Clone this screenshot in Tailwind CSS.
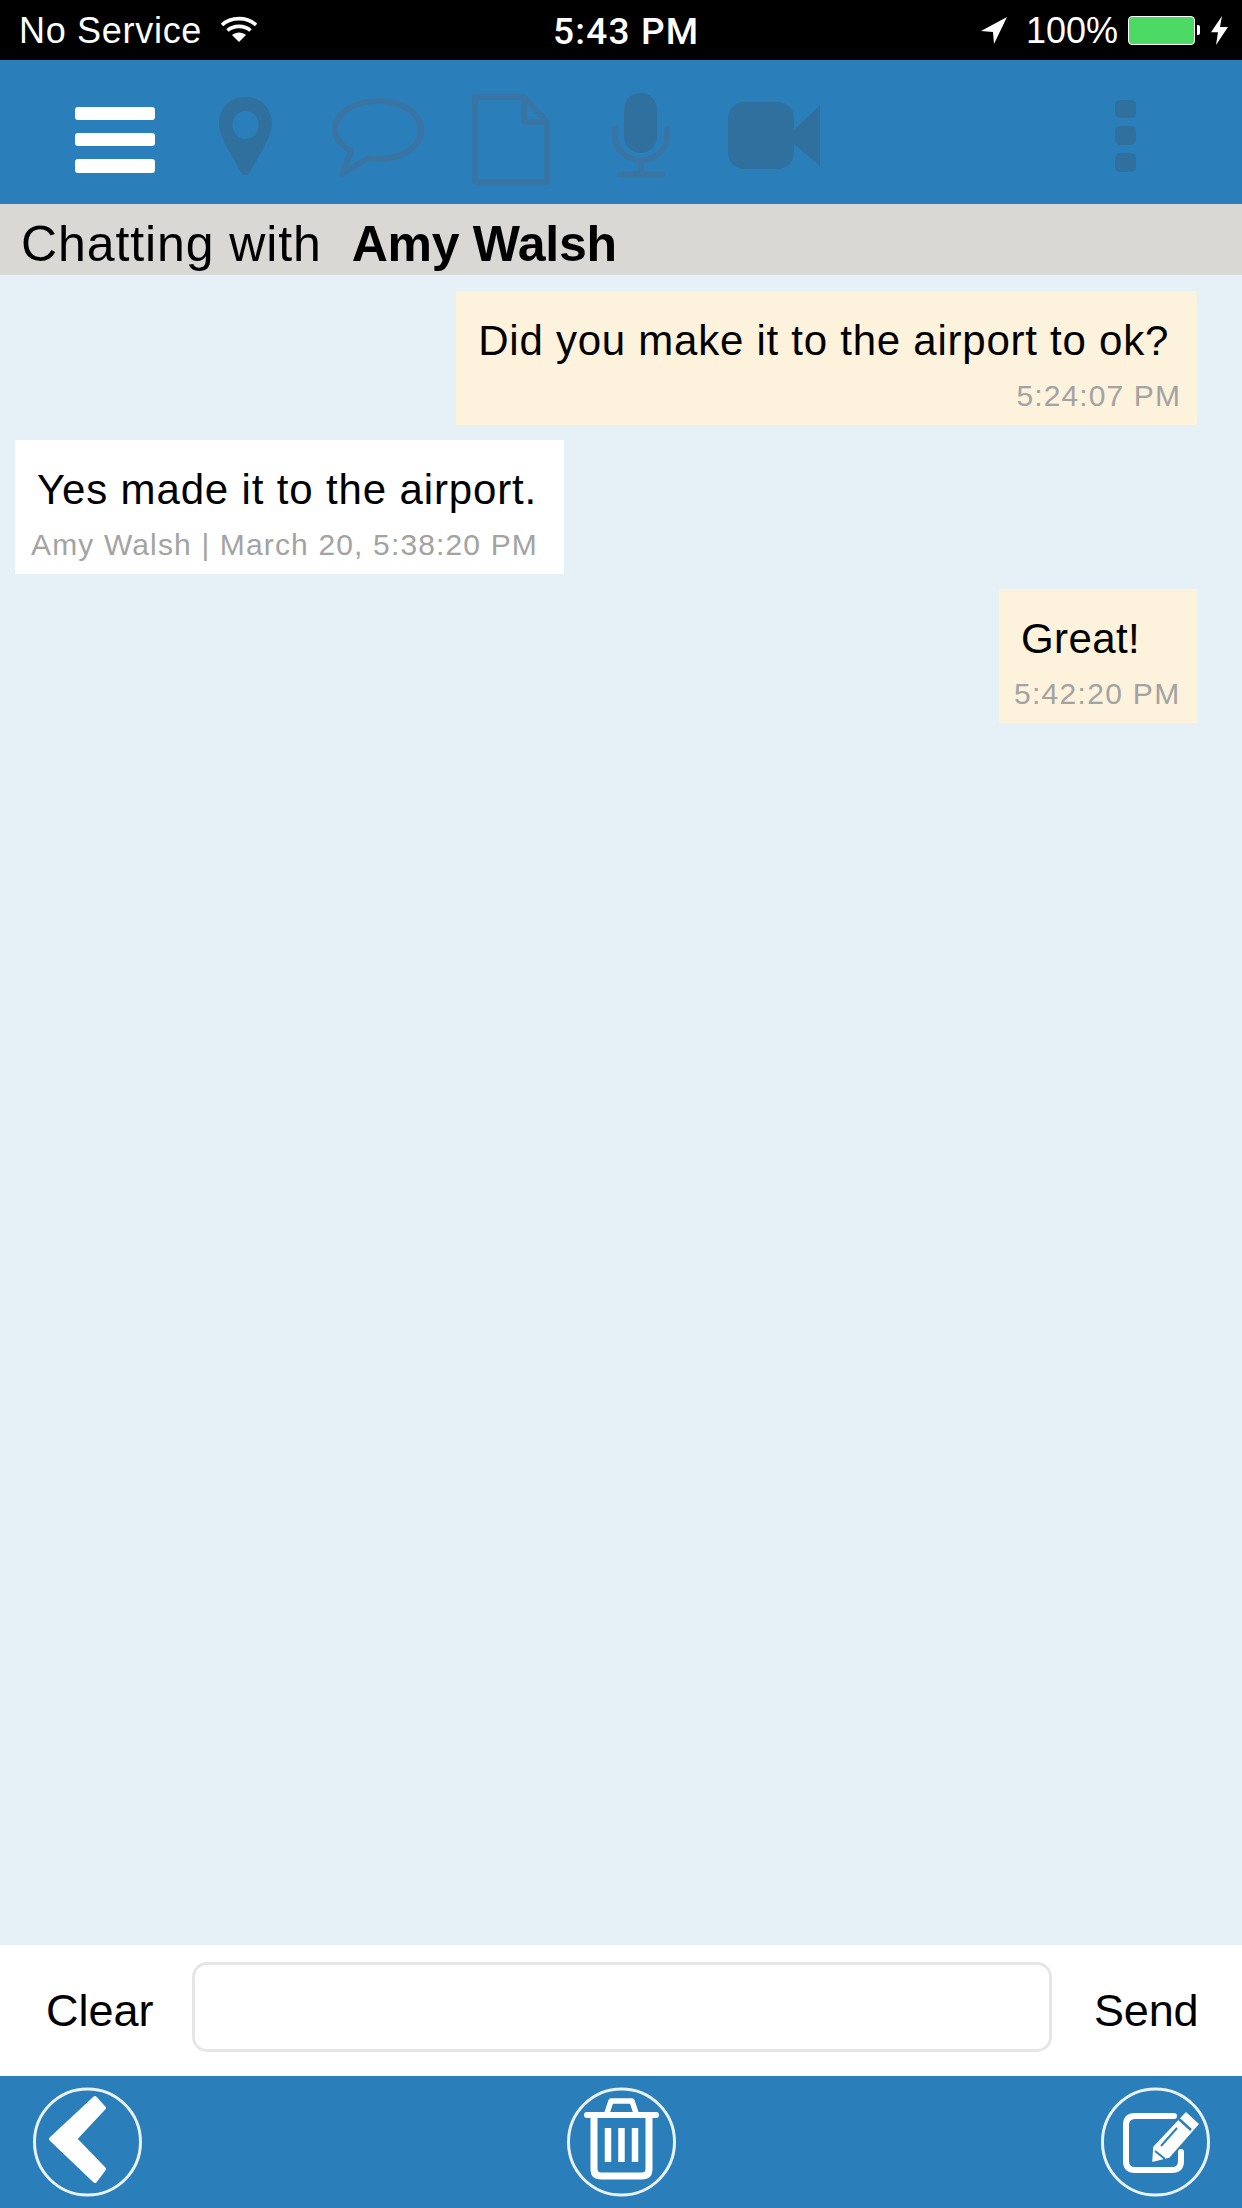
<!DOCTYPE html>
<html>
<head>
<meta charset="utf-8">
<script src="https://cdn.jsdelivr.net/npm/@tailwindcss/browser@4"></script>
</head>
<body class="m-0">
<div class="w-[1242px] h-[2208px] flex flex-col overflow-hidden bg-[#e6f1f7] font-['Liberation_Sans',Arial,sans-serif] text-black">
  <!-- status bar -->
  <div class="h-[60px] shrink-0 bg-black text-white relative flex items-center text-[36px] leading-none">
    <div class="flex items-center pl-[19px]">
      <span class="mt-[2px] tracking-[0.7px]">No Service</span>
      <svg class="ml-[18px] mb-[3px]" width="38" height="28" viewBox="0 0 38 28" fill="none" stroke="#fff" stroke-width="3.6">
        <path d="M2 10 C11 1.5 27 1.5 36 10"/>
        <path d="M7.5 15.5 C13.5 10 24.5 10 30.5 15.5"/>
        <path d="M19 27 L12 20 C16 16.5 22 16.5 26 20 Z" fill="#fff" stroke="none"/>
      </svg>
    </div>
    <div class="absolute left-[553px] top-[13px] font-['Roboto',sans-serif] font-medium text-[37px] tracking-[1.2px]">5:43 PM</div>
    <div class="ml-auto flex items-center pr-[14px]">
      <svg class="mt-[2px]" width="28" height="28" viewBox="0 0 28 28" fill="#fff"><path d="M1 14 L27 0 L14 27 L13 15 Z"/></svg>
      <span class="ml-[18px] mr-[10px] mt-[2px]">100%</span>
      <div class="w-[67px] h-[29px] rounded-[4px] border border-white bg-[#4cd964]"></div>
      <div class="w-[3px] h-[10px] bg-white rounded-r-[2px] ml-[2px]"></div>
      <svg class="ml-[11px]" width="17" height="29" viewBox="0 0 17 34" preserveAspectRatio="none" fill="#fff"><path d="M11 0 L0 19 L7 19 L5 34 L17 13 L9 13 Z"/></svg>
    </div>
  </div>
  <!-- toolbar -->
  <div class="h-[144px] shrink-0 bg-[#2a7eb9] border-b border-[#3a79a9] relative flex items-center">
    <div class="ml-[75px] w-[80px] flex flex-col gap-[13px] mt-[16px]">
      <div class="h-[13px] rounded-[3px] bg-white"></div>
      <div class="h-[13px] rounded-[3px] bg-white"></div>
      <div class="h-[14px] rounded-[3px] bg-white"></div>
    </div>
    <svg class="ml-[64px] mt-[8px]" width="53" height="78" viewBox="0 0 53 78" fill="#30709f"><path fill-rule="evenodd" d="M26.5 0 C42 0 53 11 53 27 C53 40 38 62 31 75 C29 79 24 79 22 75 C15 62 0 40 0 27 C0 11 11 0 26.5 0 Z M26.5 14 A13 14 0 1 0 26.5 42 A13 14 0 1 0 26.5 14 Z"/></svg>
    <svg class="ml-[60px] mt-[13px]" width="92" height="80" viewBox="0 0 92 80" fill="none" stroke="#3a74a3" stroke-width="5.5" stroke-linejoin="round"><path d="M46 3 C70 3 89 15 89 32 C89 49 70 61 46 61 C42 61 38 60.5 36 60 L10 76 L19 53 C8 47 3 40 3 32 C3 15 22 3 46 3 Z"/></svg>
    <svg class="ml-[48px] mt-[15px]" width="78" height="91" viewBox="0 0 78 91" fill="none" stroke="#3a74a3" stroke-width="5.5" stroke-linejoin="round"><path d="M3 3 H52 L75 28 V88 H3 Z"/><path d="M52 3 V28 H75"/></svg>
    <svg class="ml-[62px] mt-[8px]" width="58" height="85" viewBox="0 0 58 85" fill="none"><rect x="12" y="0" width="33" height="60" rx="16.5" fill="#30709f"/><path d="M3 36 V42 C3 58 15 67 29 67 C43 67 55 58 55 42 V36 M29 67 V80 M8 81.500 H50" stroke="#3a74a3" stroke-width="5.500" stroke-linecap="round"/></svg>
    <svg class="ml-[58px] mt-[7px]" width="92" height="67" viewBox="0 0 92 67" fill="#30709f"><rect x="0" y="0" width="66" height="67" rx="16"/><path d="M66 28 L92 3 V64 L66 42 Z"/></svg>
    <div class="absolute left-[1115px] top-[40px] w-[21px] flex flex-col gap-[8px]">
      <div class="h-[18px] rounded-[5px] bg-[#30709f]"></div>
      <div class="h-[19px] rounded-[5px] bg-[#30709f]"></div>
      <div class="h-[19px] rounded-[5px] bg-[#30709f]"></div>
    </div>
  </div>
  <!-- title -->
  <div class="h-[71px] shrink-0 bg-[#dad8d4] pl-[21px] pt-[8px] flex items-center text-[50px] leading-none whitespace-pre">
    <span class="tracking-[0.9px]">Chatting with</span><span class="ml-[30px] font-bold tracking-[-0.3px]">Amy Walsh</span>
  </div>
  <!-- messages -->
  <div class="flex-1 flex flex-col gap-[15px] pt-[16px]">
    <div class="self-end mr-[45px] h-[134px] bg-[#fdf2dc] pl-[22px] pr-[28px] pt-[22px] flex flex-col">
      <div class="text-[42px] leading-[56px] tracking-[0.75px] whitespace-nowrap">Did you make it to the airport to ok?</div>
      <div class="self-end -mr-[12px] mt-[9px] text-[30px] leading-[36px] tracking-[1.1px] text-[#a3a3a3] whitespace-nowrap">5:24:07 PM</div>
    </div>
    <div class="self-start ml-[15px] h-[134px] bg-white pl-[22px] pr-[26px] pt-[22px] flex flex-col">
      <div class="text-[42px] leading-[56px] tracking-[0.85px] whitespace-nowrap">Yes made it to the airport.</div>
      <div class="-ml-[6px] mt-[9px] text-[30px] leading-[36px] tracking-[1.15px] text-[#a3a3a3] whitespace-nowrap">Amy Walsh | March 20, 5:38:20 PM</div>
    </div>
    <div class="self-end mr-[45px] h-[134px] w-[198px] bg-[#fdf2dc] pl-[22px] pt-[22px] flex flex-col">
      <div class="text-[42px] leading-[56px] tracking-[0.4px] whitespace-nowrap">Great!</div>
      <div class="-ml-[7px] mt-[9px] text-[30px] leading-[36px] tracking-[1.3px] text-[#a3a3a3] whitespace-nowrap">5:42:20 PM</div>
    </div>
  </div>
  <!-- input row -->
  <div class="h-[131px] shrink-0 bg-white flex items-center text-[45px] leading-none">
    <span class="ml-[46px] w-[146px]">Clear</span>
    <div class="w-[860px] h-[90px] mb-[7px] rounded-[15px] border-[3px] border-[#e6e6e6] bg-white"></div>
    <span class="ml-[42px] tracking-[-0.2px]">Send</span>
  </div>
  <!-- footer -->
  <div class="h-[132px] shrink-0 bg-[#2a7eb9] flex items-center justify-between pl-[31px] pr-[30px]">
    <svg width="113" height="112" viewBox="0 0 113 112" fill="none">
      <circle cx="56.500" cy="56" r="53" stroke="#e8f2f8" stroke-width="3"/>
      <path d="M64 12 L73 22 L44 53 L73 83 L64 95 L20 53 Z" fill="#fff" stroke="#fff" stroke-width="4" stroke-linejoin="round"/>
    </svg>
    <svg width="113" height="112" viewBox="0 0 113 112" fill="none">
      <circle cx="56.500" cy="56" r="53" stroke="#e8f2f8" stroke-width="3"/>
      <path d="M22 29 H91" stroke="#fff" stroke-width="6" stroke-linecap="round"/>
      <path d="M42 27 L46 15 H67 L71 27" stroke="#fff" stroke-width="5.500" stroke-linejoin="round"/>
      <path d="M29 30 V83 Q29 90 36 90 H77 Q84 90 84 83 V30" stroke="#fff" stroke-width="7"/>
      <path d="M43 42 V76 M56.500 42 V76 M70 42 V76" stroke="#fff" stroke-width="6.500"/>
    </svg>
    <svg width="113" height="112" viewBox="0 0 113 112" fill="none">
      <circle cx="56.500" cy="56" r="53" stroke="#e8f2f8" stroke-width="3"/>
      <path d="M75 30 H36 Q27 30 27 39 V75 Q27 84 36 84 H73 Q82 84 82 75 V66" stroke="#fff" stroke-width="6" stroke-linecap="round"/>
      <path d="M87 27 L99 38 L70 71 L54 75 L55 61 Z" fill="#fff" stroke="#fff" stroke-width="1.500" stroke-linejoin="round"/>
      <path d="M80 33 L92 44" stroke="#2a7eb9" stroke-width="2.500"/>
      <path d="M62 60 L78 42" stroke="#2a7eb9" stroke-width="2"/>
      <path d="M56 65 L66 73" stroke="#2a7eb9" stroke-width="2"/>
    </svg>
  </div>
</div>
</body>
</html>
